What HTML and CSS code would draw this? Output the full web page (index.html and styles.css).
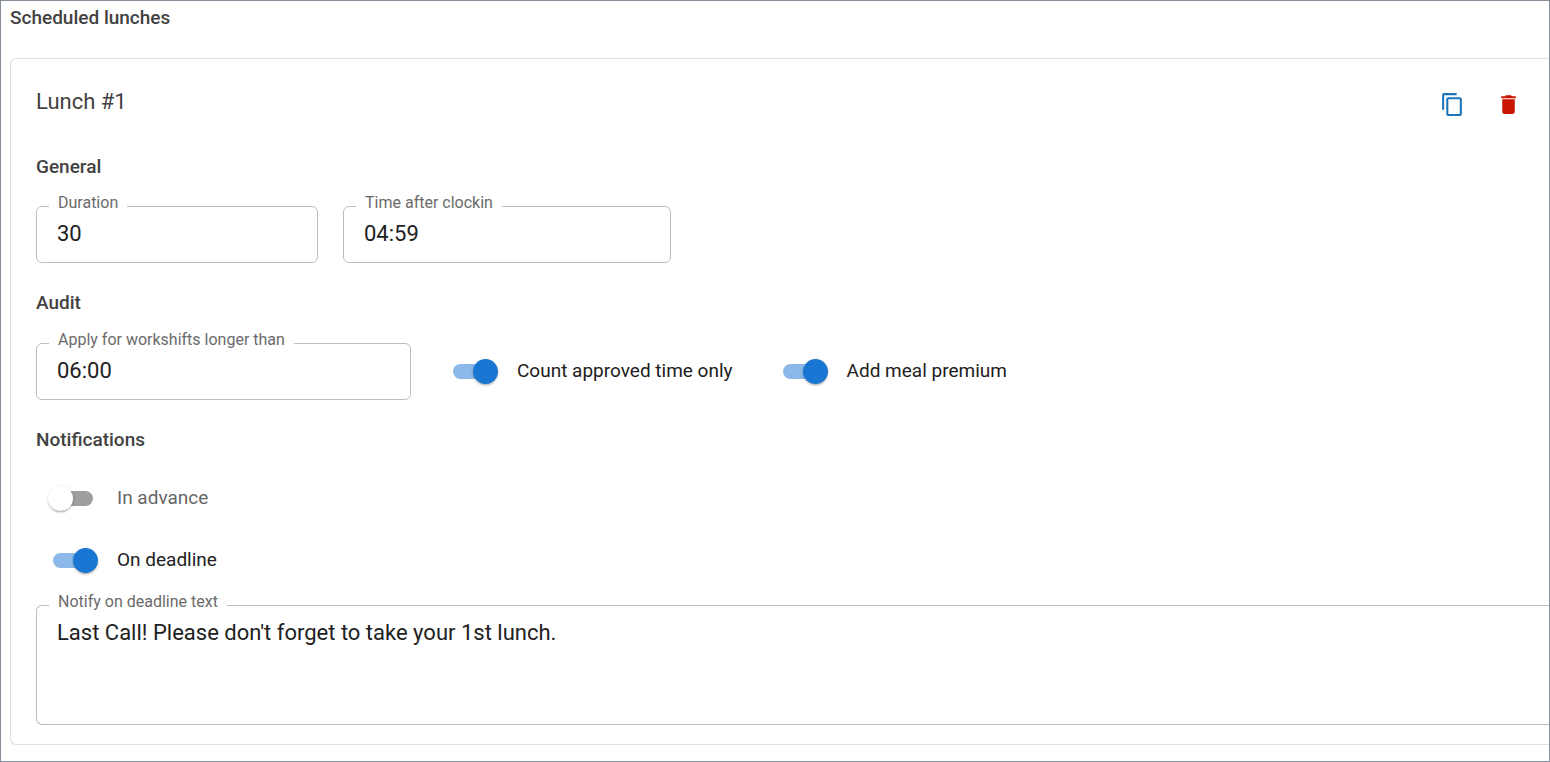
FILE: index.html
```html
<!DOCTYPE html>
<html lang="en">
<head>
<meta charset="utf-8">
<title>Scheduled lunches</title>
<link rel="stylesheet" href="styles.css">
</head>
<body>
<main class="page">
  <h1 class="page-title">Scheduled lunches</h1>
  <section class="card">
    <header class="card-header">
      <h2 class="card-title">Lunch #1</h2>
      <div class="actions">
        <button class="icon-button copy" type="button" aria-label="Duplicate lunch">
          <svg viewBox="0 0 24 24" aria-hidden="true"><path d="M16 1H4c-1.1 0-2 .9-2 2v14h2V3h12V1zm3 4H8c-1.1 0-2 .9-2 2v14c0 1.100.9 2 2 2h11c1.100 0 2-.9 2-2V7c0-1.100-.9-2-2-2zm0 16H8V7h11v14z"/></svg>
        </button>
        <button class="icon-button delete" type="button" aria-label="Delete lunch">
          <svg viewBox="0 0 24 24" aria-hidden="true"><path d="M6 19c0 1.100.9 2 2 2h8c1.100 0 2-.9 2-2V7H6v12zM19 4h-3.500l-1-1h-5l-1 1H5v2h14V4z"/></svg>
        </button>
      </div>
    </header>

    <section class="section">
      <h3 class="section-title">General</h3>
      <div class="row fields">
        <fieldset class="field duration">
          <legend><label for="duration">Duration</label></legend>
          <input id="duration" type="text" value="30">
        </fieldset>
        <fieldset class="field after">
          <legend><label for="after">Time after clockin</label></legend>
          <input id="after" type="text" value="04:59">
        </fieldset>
      </div>
    </section>

    <section class="section">
      <h3 class="section-title">Audit</h3>
      <div class="row audit">
        <fieldset class="field longer">
          <legend><label for="longer">Apply for workshifts longer than</label></legend>
          <input id="longer" type="text" value="06:00">
        </fieldset>
        <div class="row toggles">
          <label class="toggle"><input type="checkbox" role="switch" checked><span>Count approved time only</span></label>
          <label class="toggle"><input type="checkbox" role="switch" checked><span>Add meal premium</span></label>
        </div>
      </div>
    </section>

    <section class="section">
      <h3 class="section-title">Notifications</h3>
      <div class="notifications">
        <label class="toggle muted"><input type="checkbox" role="switch"><span>In advance</span></label>
        <label class="toggle"><input type="checkbox" role="switch" checked><span>On deadline</span></label>
      </div>
      <fieldset class="field message">
        <legend><label for="message">Notify on deadline text</label></legend>
        <textarea id="message" rows="3">Last Call! Please don't forget to take your 1st lunch.</textarea>
      </fieldset>
    </section>
  </section>
</main>
</body>
</html>
```

FILE: styles.css
```css
* {
  box-sizing: border-box;
}

body {
  margin: 0;
  background: #fff;
  color: #212121;
  font-family: Roboto, "Liberation Sans", sans-serif;
}

h1,
h2,
h3 {
  margin: 0;
  color: #424242;
}

.page {
  min-height: 100vh;
  padding: 5px 0 16px 9px;
  border: 1px solid #868e99;
}

.page-title,
.section-title {
  font-size: 19px;
  font-weight: 500;
  line-height: 24px;
}

.card {
  margin-top: 28px;
  padding: 24px 0 19px 25px;
  border: 1px solid #e0e0e0;
  border-right: 0;
  border-radius: 6px 0 0 6px;
}

.card-header {
  display: flex;
  align-items: flex-start;
  justify-content: space-between;
  padding: 0 20px 1px 0;
}

.card-title {
  font-size: 22px;
  font-weight: 400;
  line-height: 38px;
}

.actions {
  display: flex;
  gap: 15px;
}

.icon-button {
  display: flex;
  align-items: center;
  justify-content: center;
  width: 41px;
  height: 43px;
  padding: 0;
  border: 0;
  background: none;
  cursor: pointer;
}

.icon-button svg {
  width: 25px;
  height: 25px;
  fill: currentColor;
}

.copy {
  color: #1b75bc;
}

.delete {
  color: #c91400;
}

.section {
  margin-top: 28px;
}

.row {
  display: flex;
}

.fields {
  gap: 25px;
  margin-top: 16px;
}

.audit {
  gap: 37px;
  margin-top: 17px;
}

.toggles {
  gap: 45px;
  padding-top: 19px;
}

.field {
  min-width: 0;
  margin: 0;
  padding: 0 20px 11px 12px;
  border: 1px solid #bdbdbd;
  border-radius: 6px;
}

.field legend {
  padding: 0 9px 6px;
  color: #6b6b6b;
  font-size: 16px;
  line-height: 16px;
}

.field label {
  display: block;
}

.field input,
.field textarea {
  display: block;
  width: 100%;
  padding: 0 0 0 8px;
  border: 0;
  outline: 0;
  background: none;
  color: #212121;
  font: 400 22px/34px Roboto, "Liberation Sans", sans-serif;
}

.field input {
  height: 34px;
}

.field textarea {
  height: 97px;
  resize: none;
}

.duration {
  width: 282px;
}

.after {
  width: 328px;
}

.longer {
  width: 375px;
}

.message {
  margin-top: 14px;
  border-right: 0;
  border-radius: 6px 0 0 6px;
}

.toggle {
  display: flex;
  align-items: center;
  gap: 19px;
  height: 40px;
  font-size: 19px;
  line-height: 24px;
  cursor: pointer;
}

.toggle.muted {
  color: #666;
}

.toggle input {
  display: flex;
  align-items: center;
  width: 50px;
  height: 25px;
  margin: 0;
  appearance: none;
  cursor: pointer;
}

.toggle input::before {
  content: "";
  width: 40px;
  height: 15px;
  margin-left: 5px;
  border-radius: 8px;
  background: #9e9e9e;
}

.toggle input::after {
  content: "";
  width: 25px;
  height: 25px;
  margin-left: -45px;
  border-radius: 50%;
  background: #fff;
  box-shadow: 0 2px 2px -1px rgba(0, 0, 0, 0.2), 0 1px 3px rgba(0, 0, 0, 0.2);
}

.toggle input:checked::before {
  background: #8cb9e9;
}

.toggle input:checked::after {
  margin-left: -20px;
  background: #1976d2;
}

.notifications {
  display: grid;
  gap: 22px;
  margin-top: 26px;
  padding-left: 12px;
}
```
